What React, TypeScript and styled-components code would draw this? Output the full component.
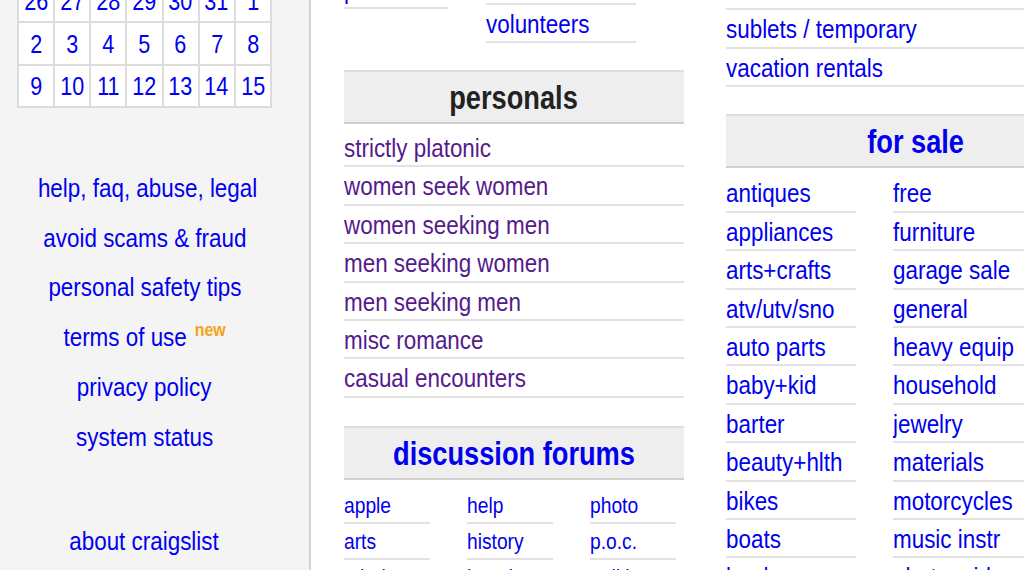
import * as React from 'react'
import styled, { createGlobalStyle } from 'styled-components'

const GlobalStyle = createGlobalStyle`
  html, body {
    margin: 0;
    padding: 0;
    background: #fff;
    overflow: hidden;
  }
  body {
    font-family: "Liberation Sans", Arial, Helvetica, sans-serif;
    font-size: 26.7px;
  }
  ul {
    list-style: none;
    margin: 0;
    padding: 0;
  }
  a {
    text-decoration: none;
  }
`

const blue = '#0000ee'
const purple = '#551a8b'
// the page type is a condensed grotesque; squeeze the regular face to match
const squeeze = 0.84

const Page = styled.div`
  display: flex;
  align-items: flex-start;
  height: 570px;
  overflow: hidden;
`

const Sidebar = styled.div`
  flex: 0 0 311px;
  box-sizing: border-box;
  height: 570px;
  background: #f4f4f4;
  border-right: 2px solid #d3d3d3;
  padding-left: 17px;
`

const SideInner = styled.div`
  width: 255px;
`

const Calendar = styled.div`
  box-sizing: border-box;
  width: 255px;
  display: grid;
  grid-template-columns: repeat(7, 1fr);
  grid-auto-rows: 40.5px;
  gap: 2px;
  padding: 2px;
  background: #dcdcdc;
  margin-top: -21.5px;
`

const Day = styled.a`
  background: #fff;
  color: ${blue};
  font-size: 25.7px;
  display: flex;
  align-items: center;
  justify-content: center;
  padding-top: 2px;
  box-sizing: border-box;
`

const Narrow = styled.span<{ $origin?: string }>`
  display: inline-block;
  white-space: nowrap;
  transform: scaleX(${squeeze});
  transform-origin: ${p => p.$origin ?? 'left center'};
`

const SideLinks = styled.div`
  margin-top: 55.8px;
`

const SideLink = styled.a<{ $gap?: number }>`
  display: block;
  text-align: center;
  line-height: 49.8px;
  height: 49.8px;
  color: ${blue};
  margin-top: ${p => p.$gap ?? 0}px;
`

const New = styled.sup`
  color: #f5a21e;
  font-weight: bold;
  font-size: 19px;
  line-height: 0;
  margin-left: 2px;
`

const Main = styled.div`
  display: flex;
  align-items: flex-start;
  margin-left: 33px;
  gap: 42px;
`

const Column = styled.div<{ $w: number }>`
  flex: 0 0 auto;
  width: ${p => p.$w}px;
`

const SubGrid = styled.div<{ $cols: string; $gap: number; $top?: number }>`
  display: grid;
  grid-template-columns: ${p => p.$cols};
  column-gap: ${p => p.$gap}px;
  align-items: start;
  margin-top: ${p => p.$top ?? 0}px;
`

const List = styled.ul<{ $pad?: number; $top?: number }>`
  padding-top: ${p => p.$pad ?? 0}px;
  margin-top: ${p => p.$top ?? 0}px;
`

const Item = styled.li<{ $small?: boolean }>`
  box-sizing: border-box;
  height: ${p => (p.$small ? 36 : 38.4)}px;
  line-height: ${p => (p.$small ? 35 : 38)}px;
  font-size: ${p => (p.$small ? 22.9 : 26.7)}px;
  border-bottom: 2px solid #e2e2e2;
  white-space: nowrap;
  overflow: hidden;
`

const Link = styled.a<{ $visited?: boolean }>`
  display: inline-block;
  color: ${p => (p.$visited ? purple : blue)};
  transform: scaleX(${squeeze});
  transform-origin: left center;
`

const Banner = styled.div<{ $dark?: boolean; $top: number }>`
  margin-top: ${p => p.$top}px;
  height: 48px;
  padding-top: 2px;
  line-height: 48px;
  background: #eee;
  border-top: 2px solid #dedede;
  border-bottom: 2px solid #cfcfcf;
  text-align: center;
  font-size: 32.4px;
  font-weight: bold;
  overflow: hidden;
  color: ${p => (p.$dark ? '#222' : blue)};
`

const days = [
  ['26', '27', '28', '29', '30', '31', '1'],
  ['2', '3', '4', '5', '6', '7', '8'],
  ['9', '10', '11', '12', '13', '14', '15'],
]

const sideLinks = [
  'help, faq, abuse, legal',
  'avoid scams & fraud',
  'personal safety tips',
  'terms of use',
  'privacy policy',
  'system status',
]

const personals = [
  'strictly platonic',
  'women seek women',
  'women seeking men',
  'men seeking women',
  'men seeking men',
  'misc romance',
  'casual encounters',
]

const forums = [
  ['apple', 'arts', 'atheist', 'autos'],
  ['help', 'history', 'housing', 'jobs'],
  ['photo', 'p.o.c.', 'politics', 'psych'],
]

const saleLeft = [
  'antiques', 'appliances', 'arts+crafts', 'atv/utv/sno', 'auto parts',
  'baby+kid', 'barter', 'beauty+hlth', 'bikes', 'boats', 'books',
]
const saleRight = [
  'free', 'furniture', 'garage sale', 'general', 'heavy equip',
  'household', 'jewelry', 'materials', 'motorcycles', 'music instr', 'photo+video',
]

export default function App() {
  return (
    <>
      <GlobalStyle />
      <Page>
        <Sidebar>
          <SideInner>
            <Calendar>
              {days.flat().map((d, i) => (
                <Day key={i} href="#">
                  <Narrow $origin="center">{d}</Narrow>
                </Day>
              ))}
            </Calendar>
            <SideLinks>
              {sideLinks.map(t => (
                <SideLink key={t} href="#">
                  <Narrow $origin="center">
                    {t}
                    {t === 'terms of use' && <> <New>new</New></>}
                  </Narrow>
                </SideLink>
              ))}
              <SideLink href="#" $gap={54.4}>
                <Narrow $origin="center">about craigslist</Narrow>
              </SideLink>
            </SideLinks>
          </SideInner>
        </Sidebar>

        <Main>
          <Column $w={340}>
            <SubGrid $cols="104px 150px" $gap={38} $top={-33.5}>
              <List $pad={4.4}>
                <Item><Link href="#">politics</Link></Item>
              </List>
              <List>
                <Item><Link href="#">rideshare</Link></Item>
                <Item><Link href="#">volunteers</Link></Item>
              </List>
            </SubGrid>

            <Banner $dark $top={26.7}>
              <Narrow $origin="center">personals</Narrow>
            </Banner>
            <List $pad={5}>
              {personals.map(t => (
                <Item key={t}><Link href="#" $visited>{t}</Link></Item>
              ))}
            </List>

            <Banner $top={28.4}>
              <Narrow $origin="center">discussion forums</Narrow>
            </Banner>
            <SubGrid $cols="86px 86px 86px" $gap={37}>
              {forums.map((col, i) => (
                <List key={i} $pad={8}>
                  {col.map(t => (
                    <Item key={t} $small><Link href="#">{t}</Link></Item>
                  ))}
                </List>
              ))}
            </SubGrid>
          </Column>

          <Column $w={380}>
            <List $top={-28.2}>
              <Item><Link href="#">rooms wanted</Link></Item>
              <Item><Link href="#">sublets / temporary</Link></Item>
              <Item><Link href="#">vacation rentals</Link></Item>
            </List>

            <Banner $top={27}>
              <Narrow $origin="center">for sale</Narrow>
            </Banner>
            <SubGrid $cols="130px 131px" $gap={37}>
              <List $pad={6.5}>
                {saleLeft.map(t => (
                  <Item key={t}><Link href="#">{t}</Link></Item>
                ))}
              </List>
              <List $pad={6.5}>
                {saleRight.map(t => (
                  <Item key={t}><Link href="#">{t}</Link></Item>
                ))}
              </List>
            </SubGrid>
          </Column>
        </Main>
      </Page>
    </>
  )
}
